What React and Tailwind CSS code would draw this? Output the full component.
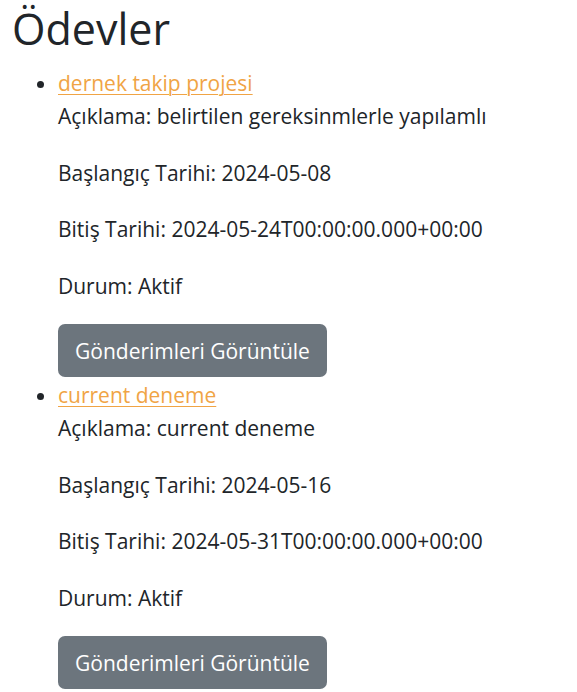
import React from 'react';

const odevler = [
  {
    id: 1,
    baslik: 'dernek takip projesi',
    aciklama: 'belirtilen gereksinmlerle yapılamlı',
    baslangic: '2024-05-08',
    bitis: '2024-05-24T00:00:00.000+00:00',
    durum: 'Aktif',
  },
  {
    id: 2,
    baslik: 'current deneme',
    aciklama: 'current deneme',
    baslangic: '2024-05-16',
    bitis: '2024-05-31T00:00:00.000+00:00',
    durum: 'Aktif',
  },
];

const App = () => {
  return (
    <div
      className="min-h-screen bg-white px-[12px] text-[#212529]"
      style={{ fontFamily: '"Open Sans", "Noto Sans", sans-serif' }}
    >
      <h1 className="pt-[1px] text-[43px] font-medium leading-[56px]">Ödevler</h1>
      <ul className="mt-[12px] list-disc pl-[46px] marker:text-[#212529]">
        {odevler.map((odev) => (
          <li key={odev.id} className="text-[21px] leading-[28px]">
            <a
              href="#"
              className="block w-fit text-[#f0a445] underline decoration-1 underline-offset-[3px]"
            >
              {odev.baslik}
            </a>
            <div className="mt-[5px]">
              <p className="mb-[28.7px]">Açıklama: {odev.aciklama}</p>
              <p className="mb-[28.7px]">Başlangıç Tarihi: {odev.baslangic}</p>
              <p className="mb-[28.7px]">Bitiş Tarihi: {odev.bitis}</p>
              <p className="mb-[24px]">Durum: {odev.durum}</p>
              <button className="mb-[4px] h-[53px] rounded-[7px] bg-[#6c757d] px-[17px] text-white">
                Gönderimleri Görüntüle
              </button>
            </div>
          </li>
        ))}
      </ul>
    </div>
  );
};

export default App;
